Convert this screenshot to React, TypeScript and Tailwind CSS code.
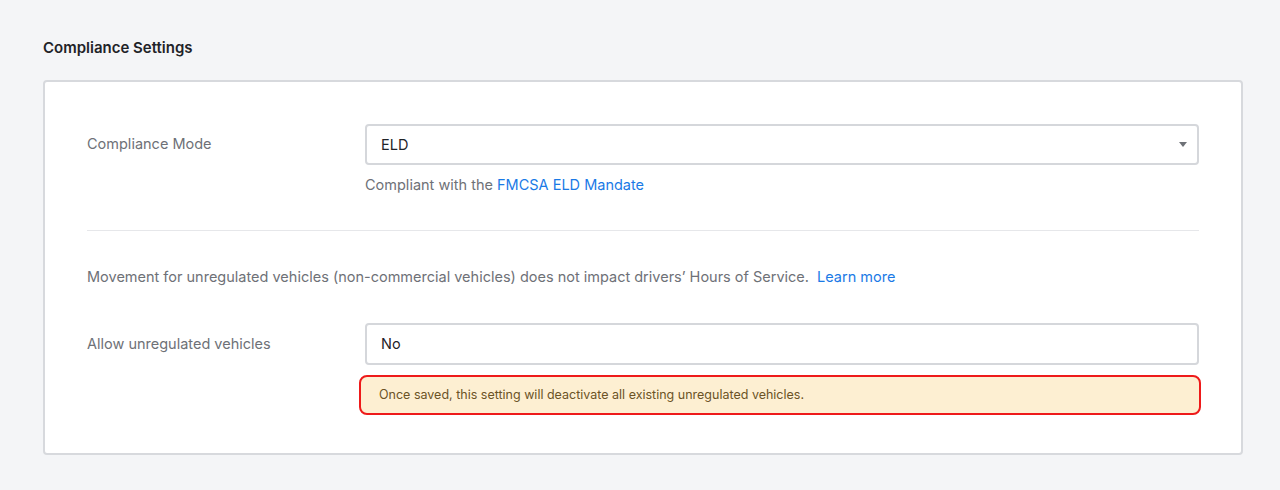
import React from "react";

export default function App() {
  return (
    <div
      className="w-[1280px] h-[490px] bg-[#f4f5f7] overflow-hidden"
      style={{ fontFamily: "Inter, 'Noto Sans', sans-serif" }}
    >
      <div className="pt-[38px] px-[43px]">
        <h2 className="text-[15px] leading-[20px] font-semibold text-[#1f2328]">Compliance Settings</h2>
        <div className="mt-[22px] w-[1200px] h-[375px] bg-white border-2 border-[#d7d9dd] rounded-[4px] px-[42px] pt-[42px]">
          <div className="flex">
            <div className="w-[278px] pt-[10px] text-[14.5px] leading-[20px] text-[#6e7177]">Compliance Mode</div>
            <div className="flex-1">
              <div className="h-[41px] border-2 border-[#d5d7db] rounded-[4px] flex items-center justify-between pl-[14px] pr-[10px]">
                <span className="text-[14.5px] text-[#1f2328]">ELD</span>
                <svg width="8" height="5" viewBox="0 0 8 5"><path d="M0 0 L8 0 L4 5 Z" fill="#6e7177" /></svg>
              </div>
              <div className="mt-[10px] text-[14.5px] leading-[20px] text-[#6e7177]">
                Compliant with the <span className="text-[#1a7ae6]">FMCSA ELD Mandate</span>
              </div>
            </div>
          </div>
          <div className="mt-[35px] border-t border-[#e6e7ea]" />
          <div className="mt-[36px] text-[14.5px] leading-[20px] text-[#6e7177]">
            Movement for unregulated vehicles (non-commercial vehicles) does not impact drivers’ Hours of Service.{" "}
            <span className="ml-[4px] text-[#1a7ae6]">Learn more</span>
          </div>
          <div className="mt-[36px] flex">
            <div className="w-[278px] pt-[11px] text-[14.5px] leading-[20px] text-[#6e7177]">Allow unregulated vehicles</div>
            <div className="flex-1">
              <div className="h-[42px] border-2 border-[#d5d7db] rounded-[4px] flex items-center pl-[14px]">
                <span className="text-[14.5px] text-[#1f2328]">No</span>
              </div>
              <div className="mt-[10px] ml-[-6px] mr-[-2px] h-[40px] bg-[#fdefd2] border-2 border-[#ee1a1a] rounded-[8px] flex items-center pl-[18px] text-[12.5px] text-[#6b5326]">
                Once saved, this setting will deactivate all existing unregulated vehicles.
              </div>
            </div>
          </div>
        </div>
      </div>
    </div>
  );
}
